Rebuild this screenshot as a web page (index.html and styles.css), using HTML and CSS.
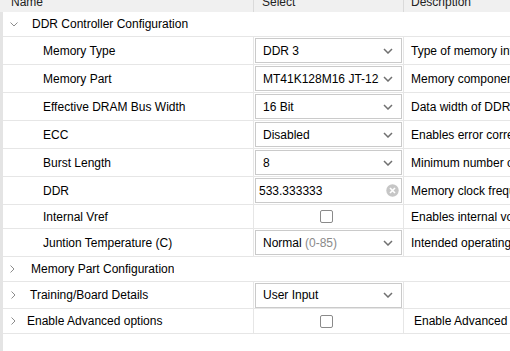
FILE: index.html
```html
<!DOCTYPE html>
<html lang="en">
<head>
    <meta charset="UTF-8">
    <title>DDR Configuration</title>
    <link rel="stylesheet" href="styles.css">
</head>
<body>
    <div class="head">
        <div class="hcell"><span>Name</span></div>
        <div class="hcell"><span>Select</span></div>
        <div class="hcell last"><span>Description</span></div>
    </div>
    <div class="tree">
        <div class="row group h25">
            <div class="gcell">
                <svg class="chev-down" width="8" height="5" viewBox="0 0 8 5"><path d="M0.5 0.5 L4 4 L7.5 0.5" /></svg>
                <span class="gap14">DDR Controller Configuration</span>
            </div>
        </div>

        <div class="row h28">
            <div class="cell name child">Memory Type</div>
            <div class="cell sel">
                <div class="dropdown"><span class="value">DDR 3</span>
                    <svg class="arrow" width="10" height="6" viewBox="0 0 10 6"><path d="M1 1 L5 5 L9 1" /></svg></div>
            </div>
            <div class="cell desc">Type of memory interface</div>
        </div>
        <div class="row h28">
            <div class="cell name child">Memory Part</div>
            <div class="cell sel">
                <div class="dropdown"><span class="value">MT41K128M16 JT-125</span>
                    <svg class="arrow" width="10" height="6" viewBox="0 0 10 6"><path d="M1 1 L5 5 L9 1" /></svg></div>
            </div>
            <div class="cell desc">Memory component part number</div>
        </div>
        <div class="row h28">
            <div class="cell name child">Effective DRAM Bus Width</div>
            <div class="cell sel">
                <div class="dropdown"><span class="value">16 Bit</span>
                    <svg class="arrow" width="10" height="6" viewBox="0 0 10 6"><path d="M1 1 L5 5 L9 1" /></svg></div>
            </div>
            <div class="cell desc">Data width of DDR interface</div>
        </div>
        <div class="row h28">
            <div class="cell name child">ECC</div>
            <div class="cell sel">
                <div class="dropdown"><span class="value">Disabled</span>
                    <svg class="arrow" width="10" height="6" viewBox="0 0 10 6"><path d="M1 1 L5 5 L9 1" /></svg></div>
            </div>
            <div class="cell desc">Enables error correction code</div>
        </div>
        <div class="row h28">
            <div class="cell name child">Burst Length</div>
            <div class="cell sel">
                <div class="dropdown"><span class="value">8</span>
                    <svg class="arrow" width="10" height="6" viewBox="0 0 10 6"><path d="M1 1 L5 5 L9 1" /></svg></div>
            </div>
            <div class="cell desc">Minimum number of data transfers</div>
        </div>
        <div class="row h28">
            <div class="cell name child">DDR</div>
            <div class="cell sel">
                <div class="textbox"><span class="value">533.333333</span>
                    <svg class="clear" width="13" height="13" viewBox="0 0 13 13">
                        <circle cx="6.5" cy="6.5" r="6.2" fill="#c6c6c6" />
                        <path d="M4 4 L9 9 M9 4 L4 9" stroke="#fff" stroke-width="1.6" />
                    </svg></div>
            </div>
            <div class="cell desc">Memory clock frequency</div>
        </div>
        <div class="row h24">
            <div class="cell name child">Internal Vref</div>
            <div class="cell sel center"><span class="check"></span></div>
            <div class="cell desc">Enables internal voltage reference</div>
        </div>
        <div class="row h28">
            <div class="cell name child">Juntion Temperature (C)</div>
            <div class="cell sel">
                <div class="dropdown"><span class="value">Normal <span class="muted">(0-85)</span></span>
                    <svg class="arrow" width="10" height="6" viewBox="0 0 10 6"><path d="M1 1 L5 5 L9 1" /></svg></div>
            </div>
            <div class="cell desc">Intended operating temperature range</div>
        </div>

        <div class="row group h25">
            <div class="gcell">
                <svg class="chev-right" width="5" height="8" viewBox="0 0 5 8"><path d="M0.5 0.5 L4 4 L0.5 7.5" /></svg>
                <span class="gap16">Memory Part Configuration</span>
            </div>
        </div>
        <div class="row h27">
            <div class="cell name">
                <svg class="chev-right" width="5" height="8" viewBox="0 0 5 8"><path d="M0.5 0.5 L4 4 L0.5 7.5" /></svg>
                <span class="gap14">Training/Board Details</span>
            </div>
            <div class="cell sel">
                <div class="dropdown"><span class="value">User Input</span>
                    <svg class="arrow" width="10" height="6" viewBox="0 0 10 6"><path d="M1 1 L5 5 L9 1" /></svg></div>
            </div>
            <div class="cell desc"></div>
        </div>
        <div class="row h25">
            <div class="cell name">
                <svg class="chev-right" width="5" height="8" viewBox="0 0 5 8"><path d="M0.5 0.5 L4 4 L0.5 7.5" /></svg>
                <span class="gap11">Enable Advanced options</span>
            </div>
            <div class="cell sel center"><span class="check"></span></div>
            <div class="cell desc wide">Enable Advanced options</div>
        </div>
        <div class="filler"></div>
    </div>
</body>
</html>
```

FILE: styles.css
```css
body {
    margin: 0;
    font-family: "Liberation Sans", Arial, sans-serif;
    font-size: 12px;
    color: #000;
    background-color: #fff;
    overflow: hidden;
}
.head {
    display: grid;
    grid-template-columns: 254px 150px 1fr;
    height: 12px;
    background-color: #f0f0f0;
    overflow: hidden;
}
.hcell {
    border-right: 1px solid #dadada;
    line-height: 14px;
    padding-left: 11px;
    white-space: nowrap;
    color: #222;
}
.hcell span {
    display: block;
    margin-top: -5px;
}
.hcell + .hcell {
    padding-left: 8px;
}
.hcell.last {
    border-right: none;
    padding-left: 7px;
}
.tree {
    border-left: 3px solid #e4e4e4;
    height: 339px;
    display: flex;
    flex-direction: column;
}
.row {
    display: grid;
    grid-template-columns: 251px 150px 1fr;
    border-bottom: 1px solid #e6e6e6;
    box-sizing: border-box;
}
.row.group {
    display: flex;
}
.h24 { height: 24px; }
.h25 { height: 25px; }
.h27 { height: 27px; }
.h28 { height: 28px; }
.cell, .gcell {
    display: flex;
    align-items: center;
    white-space: nowrap;
    overflow: hidden;
    box-sizing: border-box;
}
.cell {
    border-right: 1px solid #e6e6e6;
}
.gcell {
    padding-left: 7px;
}
.name {
    padding-left: 8px;
}
.name.child {
    padding-left: 40px;
}
.sel {
    padding: 0 1px;
}
.sel.center {
    justify-content: center;
    padding-right: 5px;
}
.desc {
    border-right: none;
    padding-left: 7px;
}
.desc.wide {
    padding-left: 10px;
}
.chev-down path, .chev-right path {
    fill: none;
    stroke: #8c8c8c;
    stroke-width: 1;
}
.chev-down {
    flex-shrink: 0;
}
.chev-right {
    flex-shrink: 0;
}
.gap16 { margin-left: 16px; }
.gap14 { margin-left: 14px; }
.gap11 { margin-left: 11px; }
.dropdown, .textbox {
    display: flex;
    align-items: center;
    width: 147px;
    height: 25px;
    box-sizing: border-box;
    border: 1px solid #cacaca;
    background-color: #fff;
}
.dropdown {
    padding-left: 7px;
    padding-right: 8px;
}
.textbox {
    padding-left: 3px;
    padding-right: 2px;
}
.value {
    flex: 1;
    overflow: hidden;
    white-space: nowrap;
}
.muted {
    color: #8a8a8a;
}
.arrow {
    margin-left: 4px;
    flex-shrink: 0;
}
.arrow path {
    fill: none;
    stroke: #707070;
    stroke-width: 1.5;
}
.clear {
    flex-shrink: 0;
}
.check {
    display: block;
    width: 13px;
    height: 13px;
    box-sizing: border-box;
    border: 1px solid #8a8a8a;
    border-radius: 2px;
    background-color: #fff;
}
.filler {
    flex: 1;
}
```
